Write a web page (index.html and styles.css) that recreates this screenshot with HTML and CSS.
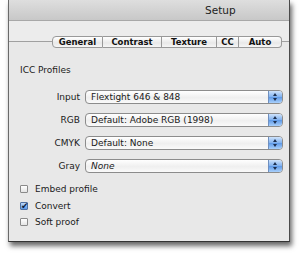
FILE: index.html
```html
<!DOCTYPE html>
<html lang="en">
<head>
  <meta charset="UTF-8">
  <title>Setup</title>
  <link rel="stylesheet" href="styles.css">
</head>
<body>
  <div class="window">
    <div class="titlebar"><span class="title">Setup</span></div>
    <div class="toolbar"></div>
    <div class="tabbar">
      <div class="tab first">General</div>
      <div class="tab w-contrast">Contrast</div>
      <div class="tab w-texture">Texture</div>
      <div class="tab w-cc">CC</div>
      <div class="tab last">Auto</div>
    </div>

    <div class="content">
      <div class="section">ICC Profiles</div>

      <div class="form">
        <label>Input</label>
        <div class="popup"><span>Flextight 646 &amp; 848</span><i class="arrows"></i></div>
        <label>RGB</label>
        <div class="popup"><span>Default: Adobe RGB (1998)</span><i class="arrows"></i></div>
        <label>CMYK</label>
        <div class="popup"><span>Default: None</span><i class="arrows"></i></div>
        <label>Gray</label>
        <div class="popup"><span class="italic">None</span><i class="arrows"></i></div>
      </div>

      <div class="checks">
        <div class="check"><span class="box"></span>Embed profile</div>
        <div class="check"><span class="box on">&#10004;</span>Convert</div>
        <div class="check"><span class="box"></span>Soft proof</div>
      </div>
    </div>
  </div>
</body>
</html>
```

FILE: styles.css
```css
body { margin: 0; background: #fff; font-family: "DejaVu Sans", sans-serif; font-size: 9px; color: #1a1a1a; width: 300px; height: 255px; overflow: hidden; }

.window { margin-left: 8px; width: 280px; height: 241px; background: #e8e8e8; border-left: 1px solid #6a6a6a; border-right: 1px solid #4a4a4a; border-bottom: 1px solid #333; box-shadow: 2px 4px 5px rgba(0,0,0,0.6); }

.titlebar { height: 21px; background: linear-gradient(#dedede, #c8c8c8); border-bottom: 1px solid #a8a8a8; box-sizing: border-box; }
.title { display: block; padding-left: 196px; line-height: 20px; font-size: 10.5px; color: #222; }

.toolbar { height: 15px; background: #ececec; }

.tabbar { display: flex; height: 12px; padding-left: 43px; background: linear-gradient(to bottom, #ececec 5px, #a0a0a0 5px, #a0a0a0 6px, #e8e8e8 6px); }
.tab { width: 51px; height: 12px; box-sizing: border-box; border: 1px solid #999; border-left: none; background: linear-gradient(#ffffff, #e8e8e8 60%, #f6f6f6); font-weight: bold; font-size: 8.5px; line-height: 10px; text-align: center; color: #111; }
.tab.first { border-left: 1px solid #999; border-radius: 4px 0 0 4px; }
.tab.w-contrast { width: 59px; }
.tab.w-texture { width: 55px; }
.tab.w-cc { width: 22px; }
.tab.last { width: 43px; border-radius: 0 4px 4px 0; }

.content { padding: 17px 0 0 11px; }
.section { line-height: 11px; }

.form { display: grid; grid-template-columns: 60px 198px; column-gap: 5px; row-gap: 9px; margin-top: 14px; align-items: center; }
.form label { text-align: right; }

.popup { display: flex; height: 14px; box-sizing: border-box; border: 1px solid #8c8c8c; border-radius: 4px; background: linear-gradient(#ffffff, #efefef 55%, #fafafa); overflow: hidden; }
.popup span { flex: 1; padding-left: 5px; line-height: 12px; }
.popup .italic { font-style: italic; }
.arrows { width: 13px; border-left: 1px solid #6f8fbf; background: linear-gradient(#cfe3fb, #7fb0ee 50%, #5d98e6 51%, #a9d0fb); position: relative; }
.arrows::before, .arrows::after { content: ""; position: absolute; left: 4px; border-left: 2.5px solid transparent; border-right: 2.5px solid transparent; }
.arrows::before { top: 2px; border-bottom: 3px solid #1c2f4f; }
.arrows::after { bottom: 2px; border-top: 3px solid #1c2f4f; }

.checks { margin-top: 8px; }
.check { display: flex; align-items: center; height: 16.5px; }
.box { width: 8px; height: 8px; box-sizing: border-box; border: 1px solid #8a8a8a; border-radius: 1px; background: linear-gradient(#ffffff, #e4e4e4); margin-right: 7px; font-size: 9px; line-height: 6px; text-align: center; color: #0b1c3c; }
.box.on { background: linear-gradient(#bcd8fb, #5d98e6); border-color: #5070a0; }
```
